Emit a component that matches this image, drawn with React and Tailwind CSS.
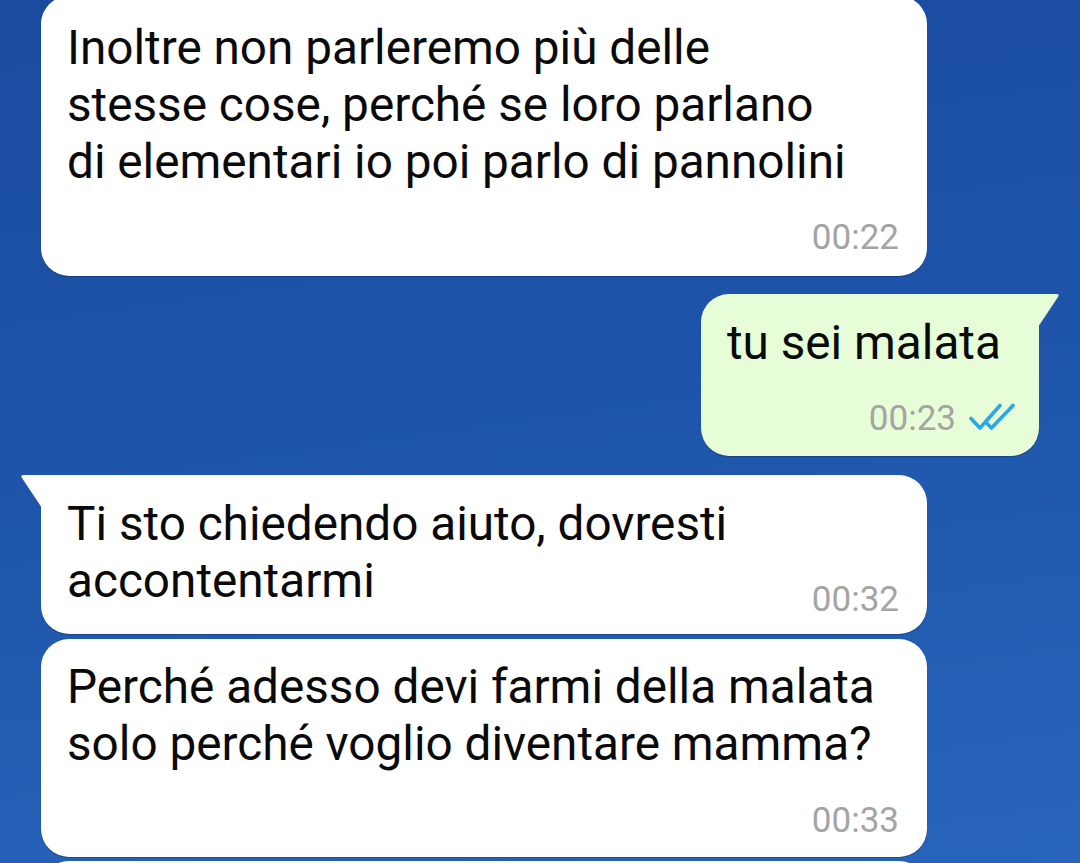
import React from "react";

function Time({ children, className = "" }) {
  return (
    <span className={`text-[35px] leading-[24px] text-[#a4a4a4] ${className}`}>
      {children}
    </span>
  );
}

function DoubleCheck() {
  return (
    <svg width="46" height="28" viewBox="0 0 46 28" fill="none" className="mt-[-2px]">
      <path
        d="M2 15.5 L11 25 L31 2.5"
        stroke="#2ea6e6"
        strokeWidth="3.6"
        strokeLinecap="round"
        strokeLinejoin="round"
      />
      <path
        d="M18.5 21 L22.5 25 L44 2.5"
        stroke="#2ea6e6"
        strokeWidth="3.6"
        strokeLinecap="round"
        strokeLinejoin="round"
      />
    </svg>
  );
}

export default function App() {
  return (
    <div className="h-[863px] w-full overflow-hidden bg-[linear-gradient(172deg,#1a4b9f_0%,#1d54a9_45%,#2765ba_100%)] font-['Roboto','Liberation_Sans',sans-serif] text-[#0a0a0a]">
      <div className="flex flex-col">

        {/* primo messaggio */}
        <div className="mt-[-4px] ml-[41px] w-[886px] rounded-[28px] bg-white pl-[26px] pr-[28px] pt-[24px] pb-[26px] shadow-[0_1px_1px_rgba(0,0,0,0.25)]">
          <p className="text-[47.7px] leading-[57px] whitespace-nowrap">
            Inoltre non parleremo più delle
            <br />
            stesse cose, perché se loro parlano
            <br />
            di elementari io poi parlo di pannolini
          </p>
          <div className="mt-[35px] flex justify-end">
            <Time>00:22</Time>
          </div>
        </div>

        {/* risposta */}
        <div className="relative mt-[18px] ml-auto mr-[41px] w-[338px] rounded-[28px] rounded-tr-none bg-[#e6fdd7] pl-[26px] pr-[24px] pt-[21px] pb-[25px] shadow-[0_1px_1px_rgba(0,0,0,0.25)]">
          <svg
            width="22"
            height="34"
            viewBox="0 0 22 34"
            className="absolute top-0 right-[-21px]"
          >
            <path d="M0 0 H18.5 Q22 0 20 3 L0 33 Z" fill="#e6fdd7" />
          </svg>
          <p className="text-[47.7px] leading-[57px] whitespace-nowrap">tu sei malata</p>
          <div className="mt-[33px] flex items-end justify-end gap-[13px]">
            <Time>00:23</Time>
            <DoubleCheck />
          </div>
        </div>

        {/* messaggi successivi */}
        <div className="relative mt-[19px] ml-[41px] w-[886px] rounded-[28px] rounded-tl-none bg-white pl-[26px] pr-[28px] pt-[21px] pb-[24px] shadow-[0_1px_1px_rgba(0,0,0,0.25)]">
          <svg
            width="22"
            height="34"
            viewBox="0 0 22 34"
            className="absolute top-0 left-[-21px]"
          >
            <path d="M22 0 H3.5 Q0 0 2 3 L22 33 Z" fill="#ffffff" />
          </svg>
          <div className="flex items-end justify-between">
            <p className="text-[47.7px] leading-[57px] whitespace-nowrap">
              Ti sto chiedendo aiuto, dovresti
              <br />
              accontentarmi
            </p>
            <Time className="mb-[-2px]">00:32</Time>
          </div>
        </div>

        <div className="mt-[5px] ml-[41px] w-[886px] rounded-[28px] bg-white pl-[26px] pr-[28px] pt-[20px] pb-[24px] shadow-[0_1px_1px_rgba(0,0,0,0.25)]">
          <p className="text-[47.7px] leading-[57px] whitespace-nowrap">
            Perché adesso devi farmi della malata
            <br />
            solo perché voglio diventare mamma?
          </p>
          <div className="mt-[36px] flex justify-end">
            <Time>00:33</Time>
          </div>
        </div>

        <div className="mt-[4px] ml-[41px] h-[80px] w-[886px] rounded-[28px] bg-white" />
      </div>
    </div>
  );
}
